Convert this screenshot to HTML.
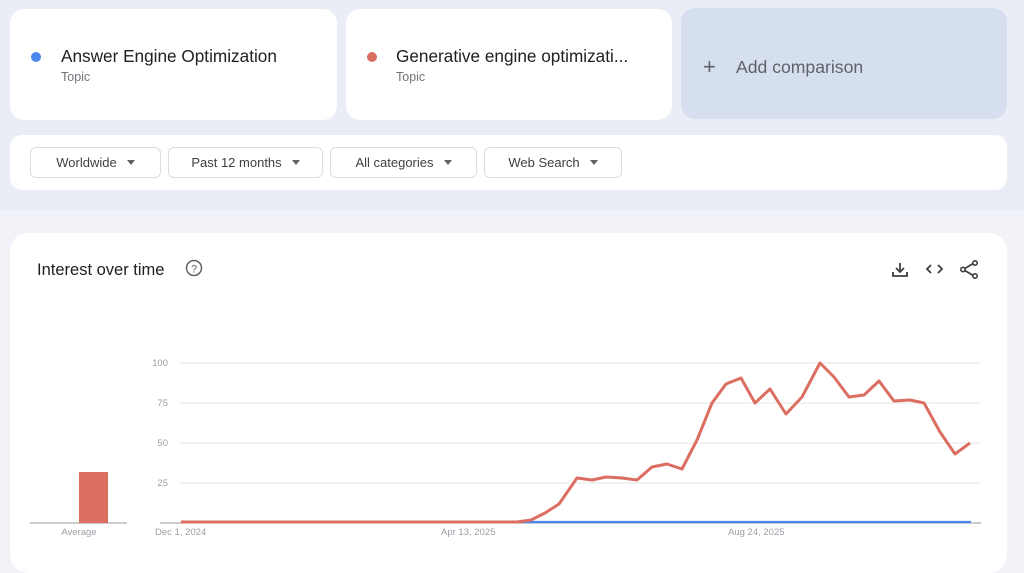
<!DOCTYPE html>
<html><head><style>
*{box-sizing:border-box;margin:0;padding:0}
body{width:1024px;height:552px;overflow:hidden;background:#f1f3f9;font-family:"Liberation Sans",sans-serif;position:relative}
.top{position:absolute;left:0;top:0;width:1024px;height:210px;background:#eaedf6}
.card{position:absolute;background:#fff;border-radius:14px}
.dot{position:absolute;width:10px;height:10px;border-radius:50%}
.t1{position:absolute;font-size:17.2px;color:#202124}
.t2{position:absolute;font-size:12.5px;color:#70757a}
.btn{position:absolute;top:147px;height:31px;border:1px solid #dadce0;border-radius:6px;font-size:13px;color:#3c4043;display:flex;align-items:center;justify-content:center;gap:10px}
.tri{width:0;height:0;border-left:4.5px solid transparent;border-right:4.5px solid transparent;border-top:5px solid #5f6368}
</style></head><body>
<div class="top"></div>
<div class="card" style="left:10px;top:9px;width:327px;height:111px">
 <div class="dot" style="left:21px;top:43px;background:#4e86f0"></div>
 <div class="t1" style="left:51px;top:37px">Answer Engine Optimization</div>
 <div class="t2" style="left:51px;top:61px">Topic</div>
</div>
<div class="card" style="left:346px;top:9px;width:326px;height:111px">
 <div class="dot" style="left:21px;top:43px;background:#db6e61"></div>
 <div class="t1" style="left:50px;top:37px">Generative engine optimizati...</div>
 <div class="t2" style="left:50px;top:61px">Topic</div>
</div>
<div class="card" style="left:681px;top:8px;width:326px;height:111px;background:#d6dff0">
 <div style="position:absolute;left:22px;top:48px;font-size:22px;color:#5f6368;line-height:1">+</div>
 <div style="position:absolute;left:55px;top:49px;font-size:17.6px;color:#5f6368">Add comparison</div>
</div>
<div class="card" style="left:10px;top:135px;width:997px;height:55px;border-radius:12px"></div>
<div class="btn" style="left:30px;width:131px">Worldwide <span class="tri"></span></div>
<div class="btn" style="left:168px;width:155px">Past 12 months <span class="tri"></span></div>
<div class="btn" style="left:330px;width:147px">All categories <span class="tri"></span></div>
<div class="btn" style="left:484px;width:138px">Web Search <span class="tri"></span></div>
<div class="card" style="left:10px;top:233px;width:997px;height:340px;border-radius:18px">
 <div style="position:absolute;left:27px;top:28px;font-size:16.5px;color:#202124">Interest over time</div>
</div>
<svg style="position:absolute;left:0;top:0" width="1024" height="552">
 <circle cx="194" cy="268" r="7.5" fill="none" stroke="#5f6368" stroke-width="1.5"/>
 <text x="194" y="272.5" font-size="11" text-anchor="middle" fill="#5f6368" font-family="Liberation Sans">?</text>
 <g stroke="#3c4043" stroke-width="1.8" fill="none">
  <path d="M900 263v9M896 268l4 4 4-4M893 272v4h14v-4"/>
  <path d="M931 265l-4 4 4 4M938 265l4 4-4 4"/>
  <path d="M964 269l10-6M964 270l10 6"/>
 </g>
 <g fill="#fff" stroke="#3c4043" stroke-width="1.6"><circle cx="975" cy="263" r="2.2"/><circle cx="963" cy="269.5" r="2.2"/><circle cx="975" cy="276" r="2.2"/></g>
 <g stroke="#e6e6e6" stroke-width="1">
  <line x1="180" y1="363" x2="981" y2="363"/><line x1="180" y1="403" x2="981" y2="403"/>
  <line x1="180" y1="443" x2="981" y2="443"/><line x1="180" y1="483" x2="981" y2="483"/>
 </g>
 <line x1="160" y1="523" x2="981" y2="523" stroke="#999" stroke-width="1"/>
 <line x1="30" y1="523" x2="127" y2="523" stroke="#999" stroke-width="1"/>
 <rect x="79" y="472" width="29" height="51" fill="#db6e61"/>
 <g font-size="9.5" fill="#9aa0a6" font-family="Liberation Sans">
  <text x="168" y="366" text-anchor="end">100</text><text x="168" y="406" text-anchor="end">75</text>
  <text x="168" y="446" text-anchor="end">50</text><text x="168" y="486" text-anchor="end">25</text>
  <text x="79" y="535" text-anchor="middle">Average</text>
  <text x="155" y="535">Dec 1, 2024</text><text x="441" y="535">Apr 13, 2025</text><text x="728" y="535">Aug 24, 2025</text>
 </g>
 <line x1="181" y1="522" x2="971" y2="522" stroke="#4e86f0" stroke-width="2.2"/>
 <polyline fill="none" stroke="#db6e61" stroke-width="3" stroke-linejoin="round" points="181,522 517,522 531,520 545,513 559,504 577,478 592,480 606,477 622,478 637,480 652,467 667,464 682,469 697,440 712,403 726,384 741,378 755,403 770,389 786,414 802,397 820,363 834,377 849,397 864,395 879,381 894,401 910,400 924,403 940,432 955,454 970,443"/>
</svg>
</body></html>
